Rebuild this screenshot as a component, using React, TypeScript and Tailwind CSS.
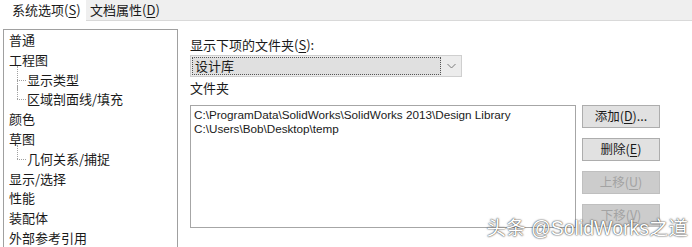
import React from "react";

const CJK = "font-['Microsoft_YaHei','Noto_Sans_CJK_SC',sans-serif]";

function Mn({ c }: { c: string }) {
  return (
    <>
      (<span className="underline underline-offset-2">{c}</span>)
    </>
  );
}

type Row = { t: string; child?: boolean; last?: boolean; first?: boolean };

const rows: Row[] = [
  { t: "普通" },
  { t: "工程图" },
  { t: "显示类型", child: true, first: true },
  { t: "区域剖面线/填充", child: true, last: true },
  { t: "颜色" },
  { t: "草图" },
  { t: "几何关系/捕捉", child: true, first: true, last: true },
  { t: "显示/选择" },
  { t: "性能" },
  { t: "装配体" },
  { t: "外部参考引用" },
];

function TreeRow({ r }: { r: Row }) {
  if (!r.child) {
    return <div className="h-[19.8px] leading-[19.8px] whitespace-nowrap">{r.t}</div>;
  }
  return (
    <div className="h-[19.8px] leading-[19.8px] whitespace-nowrap flex relative">
      <div className="w-[18px] relative shrink-0">
        <div
          className={
            "absolute left-[8px] w-0 border-l border-dotted border-[#a0a0a0] " +
            (r.last ? "top-[-4px] h-[14px]" : "top-[-4px] h-[24px]")
          }
        />
        <div className="absolute left-[8px] top-[10px] w-[9px] h-0 border-t border-dotted border-[#a0a0a0]" />
      </div>
      <span>{r.t}</span>
    </div>
  );
}

function Btn({ children, disabled }: { children: React.ReactNode; disabled?: boolean }) {
  return (
    <div
      className={
        "w-[78px] h-[23px] flex items-center justify-center border text-[12.5px] " +
        (disabled
          ? "bg-[#cccccc] border-[#bfbfbf] text-[#a3a3a3]"
          : "bg-[#e1e1e1] border-[#adadad] text-[#1a1a1a]")
      }
    >
      {children}
    </div>
  );
}

export default function App() {
  return (
    <div className={"w-[692px] h-[247px] bg-white relative overflow-hidden text-[13px] text-[#1a1a1a] " + CJK}>
      {/* tab strip */}
      <div className="h-[21px] bg-[#efefef] border-b border-[#d9d9d9] flex">
        <div className="w-[86px] h-[21px] bg-white pl-[12px] leading-[20px] whitespace-nowrap">
          系统选项<Mn c="S" />
        </div>
        <div className="w-[78px] pl-[4px] leading-[20px] whitespace-nowrap">
          文档属性<Mn c="D" />
        </div>
      </div>

      <div className="flex">
        {/* left tree */}
        <div className="ml-[3px] mt-[8px] w-[175px] h-[240px] border border-[#a0a0a0] pl-[5px] shrink-0">
          {rows.map((r, i) => (
            <TreeRow key={i} r={r} />
          ))}
        </div>

        {/* right */}
        <div className="ml-[12px] mt-[15px] flex flex-col">
          <div className="h-[18px] leading-[18px] whitespace-nowrap">
            显示下项的文件夹<Mn c="S" />:
          </div>
          <div className="mt-[1px] w-[272px] h-[22px] border border-[#cfcfcf] bg-[#ececec] flex items-center">
            <div className="ml-[1px] w-[249px] h-[18px] bg-[#e0e0e0] border border-dotted border-[#555] leading-[16px] pl-[2px]">
              设计库
            </div>
            <div className="flex-1 flex items-center justify-center">
              <svg width="9" height="6" viewBox="0 0 9 6">
                <path d="M0.5 1 L4.5 5 L8.5 1" fill="none" stroke="#7a7a7a" strokeWidth="1" />
              </svg>
            </div>
          </div>
          <div className="mt-[2px] h-[18px] leading-[18px]">文件夹</div>
          <div className="mt-[8px] flex">
            <div className="w-[386px] h-[123px] border border-[#a6a6a6] pl-[3px] pt-[2px] text-[11.7px] leading-[14px] font-['Liberation_Sans','Noto_Sans_CJK_SC',sans-serif] text-[#1a1a1a]">
              <div className="whitespace-nowrap">C:\ProgramData\SolidWorks\SolidWorks 2013\Design Library</div>
              <div className="whitespace-nowrap">C:\Users\Bob\Desktop\temp</div>
            </div>
            <div className="ml-[6px] flex flex-col gap-[10px]">
              <Btn>
                添加<Mn c="D" />...
              </Btn>
              <Btn>
                删除<Mn c="E" />
              </Btn>
              <Btn disabled>
                上移<Mn c="U" />
              </Btn>
              <Btn disabled>
                下移<Mn c="V" />
              </Btn>
            </div>
          </div>
        </div>
      </div>

      {/* watermark */}
      <div className="absolute right-[4px] top-[216px] text-[19.5px] leading-[24px] text-white whitespace-nowrap font-['Liberation_Sans','Noto_Sans_CJK_SC',sans-serif] [text-shadow:0_0_2px_rgba(0,0,0,0.75),0_0_1px_rgba(0,0,0,0.6)]">
        头条 @SolidWorks之道
      </div>
    </div>
  );
}
